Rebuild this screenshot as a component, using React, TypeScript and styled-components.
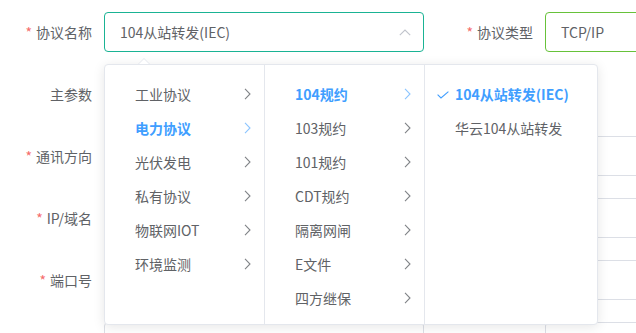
import React from "react";
import styled, { createGlobalStyle } from "styled-components";

const GlobalStyle = createGlobalStyle`
  html, body {
    margin: 0;
    padding: 0;
    background: #ffffff;
    overflow: hidden;
  }
  body {
    font-family: "Noto Sans CJK SC", "Liberation Sans", sans-serif;
    font-size: 14px;
    color: #606266;
  }
  * { box-sizing: border-box; }
`;

const Form = styled.div`
  display: flex;
  flex-direction: column;
  gap: 22px;
  padding-top: 12px;
  width: 900px;
`;

const Row = styled.div`
  display: flex;
  gap: 17px;
  height: 40px;
`;

const Item = styled.div`
  display: flex;
  align-items: center;
  height: 40px;
`;

const Label = styled.div`
  width: 104px;
  padding-right: 12px;
  text-align: right;
  line-height: 40px;
  font-size: 14px;
  color: #606266;
  white-space: nowrap;
`;

const Star = styled.span`
  color: #f56c6c;
  margin-right: 4px;
`;

const Control = styled.div`
  position: relative;
  width: 320px;
  height: 40px;
`;

const Box = styled.div<{ $border: string }>`
  display: flex;
  align-items: center;
  justify-content: space-between;
  height: 40px;
  padding: 0 12px 0 15px;
  border: 1px solid ${(p) => p.$border};
  border-radius: 4px;
  background: #fff;
  font-size: 14px;
  color: #606266;
  line-height: 38px;
`;

const Dropdown = styled.div`
  position: absolute;
  top: 52px;
  left: 0;
  z-index: 10;
  display: flex;
  background: #fff;
  border: 1px solid #e4e7ed;
  border-radius: 4px;
  box-shadow: 0 2px 12px 0 rgba(0, 0, 0, 0.1);
`;

const Arrow = styled.div`
  position: absolute;
  top: -7px;
  left: 33px;
  width: 0;
  height: 0;
  border-left: 6px solid transparent;
  border-right: 6px solid transparent;
  border-bottom: 6px solid #e4e7ed;
  &::after {
    content: "";
    position: absolute;
    left: -5px;
    top: 1px;
    border-left: 5px solid transparent;
    border-right: 5px solid transparent;
    border-bottom: 5px solid #fff;
  }
`;

const Menu = styled.ul<{ $w: number; $last?: boolean }>`
  list-style: none;
  margin: 0;
  width: ${(p) => p.$w}px;
  padding: 12px 0 9px;
  border-right: ${(p) => (p.$last ? "none" : "1px solid #e4e7ed")};
`;

const Node = styled.li<{ $active?: boolean }>`
  position: relative;
  display: flex;
  align-items: center;
  justify-content: space-between;
  height: 34px;
  padding: 0 13px 0 30px;
  font-size: 14px;
  color: ${(p) => (p.$active ? "#409eff" : "#606266")};
  font-weight: ${(p) => (p.$active ? 700 : 400)};
  white-space: nowrap;
`;

const CheckMark = styled.svg`
  position: absolute;
  left: 12px;
  top: 14px;
`;

const Chevron = ({ active }: { active?: boolean }) => (
  <svg width="7" height="12" viewBox="0 0 7 12" fill="none">
    <path
      d="M1 0.8 L6 6 L1 11.2"
      stroke={active ? "#8cc5ff" : "#808387"}
      strokeWidth="1.1"
    />
  </svg>
);

const UpArrow = () => (
  <svg width="12" height="7" viewBox="0 0 12 7" fill="none">
    <path d="M0.8 6.2 L6 1 L11.2 6.2" stroke="#c0c4cc" strokeWidth="1.1" />
  </svg>
);

const col1 = ["工业协议", "电力协议", "光伏发电", "私有协议", "物联网IOT", "环境监测"];
const col2 = ["104规约", "103规约", "101规约", "CDT规约", "隔离网闸", "E文件", "四方继保"];

export default function App() {
  return (
    <>
      <GlobalStyle />
      <Form>
        <Row>
          <Item>
            <Label>
              <Star>*</Star>协议名称
            </Label>
            <Control>
              <Box $border="#1ab394">
                <span>104从站转发(IEC)</span>
                <UpArrow />
              </Box>
              <Dropdown>
                <Arrow />
                <Menu $w={160}>
                  {col1.map((t) => (
                    <Node key={t} $active={t === "电力协议"}>
                      <span>{t}</span>
                      <Chevron active={t === "电力协议"} />
                    </Node>
                  ))}
                </Menu>
                <Menu $w={160}>
                  {col2.map((t) => (
                    <Node key={t} $active={t === "104规约"}>
                      <span>{t}</span>
                      <Chevron active={t === "104规约"} />
                    </Node>
                  ))}
                </Menu>
                <Menu $w={172} $last>
                  <Node $active>
                    <CheckMark width="12" height="8" viewBox="0 0 12 8" fill="none">
                      <path d="M0.6 3.6 L4 7 L11.4 0.6" stroke="#409eff" strokeWidth="1.1" />
                    </CheckMark>
                    <span>104从站转发(IEC)</span>
                  </Node>
                  <Node>
                    <span>华云104从站转发</span>
                  </Node>
                </Menu>
              </Dropdown>
            </Control>
          </Item>
          <Item>
            <Label>
              <Star>*</Star>协议类型
            </Label>
            <Control>
              <Box $border="#67c23a">
                <span>TCP/IP</span>
              </Box>
            </Control>
          </Item>
        </Row>
        <Row>
          <Item>
            <Label>主参数</Label>
          </Item>
        </Row>
        <Row>
          <Item>
            <Label>
              <Star>*</Star>通讯方向
            </Label>
            <Control>
              <Box $border="#dcdfe6" />
            </Control>
          </Item>
          <Item>
            <Label />
            <Control>
              <Box $border="#dcdfe6" />
            </Control>
          </Item>
        </Row>
        <Row>
          <Item>
            <Label>
              <Star>*</Star>IP/域名
            </Label>
            <Control>
              <Box $border="#dcdfe6" />
            </Control>
          </Item>
          <Item>
            <Label />
            <Control>
              <Box $border="#dcdfe6" />
            </Control>
          </Item>
        </Row>
        <Row>
          <Item>
            <Label>
              <Star>*</Star>端口号
            </Label>
            <Control>
              <Box $border="#dcdfe6" />
            </Control>
          </Item>
          <Item>
            <Label />
            <Control>
              <Box $border="#dcdfe6" />
            </Control>
          </Item>
        </Row>
        <Row>
          <Item>
            <Label />
            <Control>
              <Box $border="#dcdfe6" />
            </Control>
          </Item>
          <Item>
            <Label />
            <Control>
              <Box $border="#dcdfe6" />
            </Control>
          </Item>
        </Row>
      </Form>
    </>
  );
}
